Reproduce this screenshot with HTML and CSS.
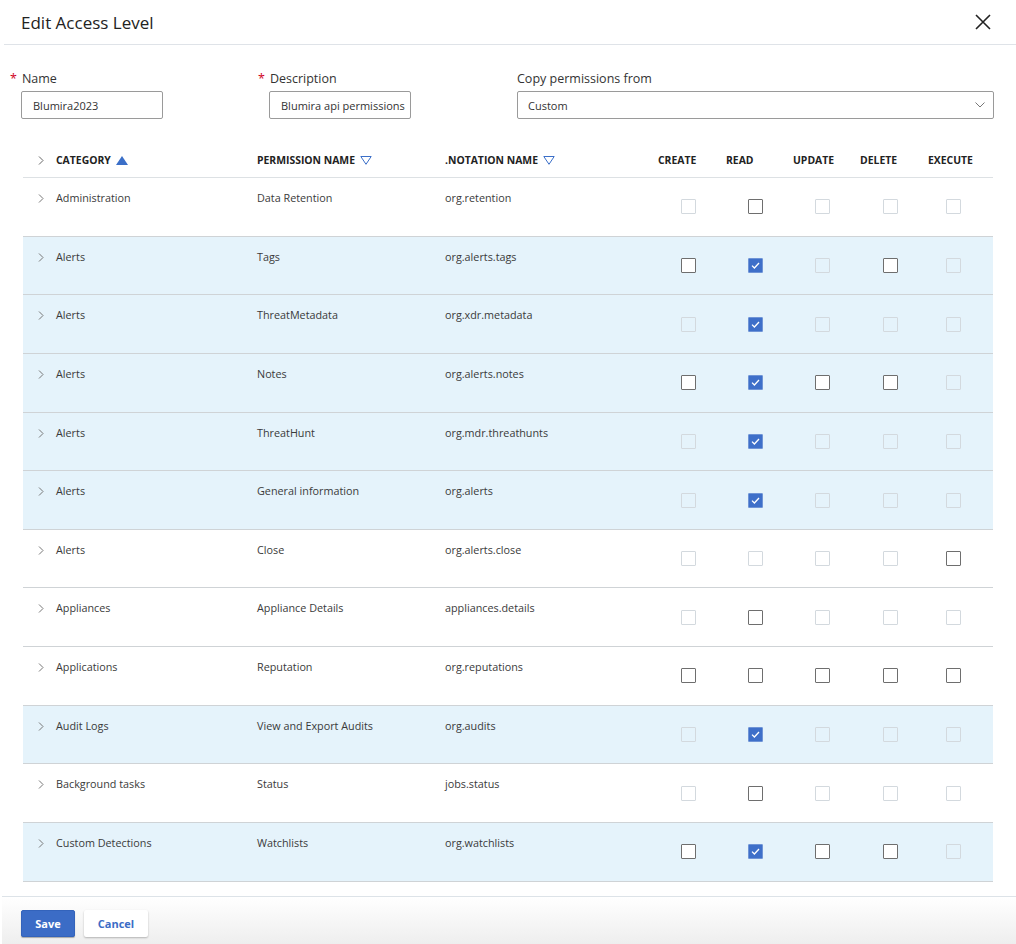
FILE: index.html
```html
<!DOCTYPE html>
<html lang="en">
<head>
    <meta charset="UTF-8">
    <meta name="viewport" content="width=device-width, initial-scale=1.0">
    <title>Edit Access Level</title>
    <link rel="stylesheet" href="styles.css">
</head>
<body>
    <div class="dialog">
        <div class="dialog-header">
            <h1>Edit Access Level</h1>
            <button class="close" aria-label="Close">
                <svg width="16" height="16" viewBox="0 0 16 16"><path d="M1 1L15 15M15 1L1 15" stroke="#222" stroke-width="1.6" fill="none"/></svg>
            </button>
        </div>

        <div class="form-row">
            <div class="field">
                <label class="required">Name</label>
                <input class="text-input" type="text" value="Blumira2023">
            </div>
            <div class="field">
                <label class="required">Description</label>
                <input class="text-input" type="text" value="Blumira api permissions">
            </div>
            <div class="field field-wide">
                <label>Copy permissions from</label>
                <div class="select">
                    <span>Custom</span>
                    <svg width="10" height="6" viewBox="0 0 10 6"><path d="M0.5 0.5L5 5L9.5 0.5" stroke="#777" fill="none"/></svg>
                </div>
            </div>
        </div>

        <div class="table">
            <div class="row head">
                <div class="cell chev"><svg width="6" height="9" viewBox="0 0 6 9"><path d="M1 0.5L5 4.5L1 8.5" stroke="#666" fill="none"/></svg></div>
                <div class="cell">CATEGORY <svg class="sort" width="12" height="9" viewBox="0 0 12 9"><path d="M6 0L12 9H0Z" fill="#3b6fc8"/></svg></div>
                <div class="cell">PERMISSION NAME <svg class="sort" width="12" height="9" viewBox="0 0 12 9"><path d="M0.8 0.5H11.2L6 8.3Z" stroke="#3b6fc8" fill="none"/></svg></div>
                <div class="cell">.NOTATION NAME <svg class="sort" width="12" height="9" viewBox="0 0 12 9"><path d="M0.8 0.5H11.2L6 8.3Z" stroke="#3b6fc8" fill="none"/></svg></div>
                <div class="cell op">CREATE</div>
                <div class="cell op">READ</div>
                <div class="cell op">UPDATE</div>
                <div class="cell op">DELETE</div>
                <div class="cell op">EXECUTE</div>
                <div class="cell"></div>
            </div>

            <div class="row">
                <div class="cell chev"><svg width="6" height="9" viewBox="0 0 6 9"><path d="M1 0.5L5 4.5L1 8.5" stroke="#777" fill="none"/></svg></div>
                <div class="cell">Administration</div>
                <div class="cell">Data Retention</div>
                <div class="cell">org.retention</div>
                <div class="cell box-cell"><span class="box off"></span></div>
                <div class="cell box-cell"><span class="box"></span></div>
                <div class="cell box-cell"><span class="box off"></span></div>
                <div class="cell box-cell"><span class="box off"></span></div>
                <div class="cell box-cell"><span class="box off"></span></div>
                <div class="cell"></div>
            </div>

            <div class="row selected">
                <div class="cell chev"><svg width="6" height="9" viewBox="0 0 6 9"><path d="M1 0.5L5 4.5L1 8.5" stroke="#777" fill="none"/></svg></div>
                <div class="cell">Alerts</div>
                <div class="cell">Tags</div>
                <div class="cell">org.alerts.tags</div>
                <div class="cell box-cell"><span class="box"></span></div>
                <div class="cell box-cell"><span class="box on"><svg width="9" height="7" viewBox="0 0 9 7"><path d="M1 3.6L3.4 6L8 1" stroke="#fff" stroke-width="1.3" fill="none"/></svg></span></div>
                <div class="cell box-cell"><span class="box off"></span></div>
                <div class="cell box-cell"><span class="box"></span></div>
                <div class="cell box-cell"><span class="box off"></span></div>
                <div class="cell"></div>
            </div>

            <div class="row selected">
                <div class="cell chev"><svg width="6" height="9" viewBox="0 0 6 9"><path d="M1 0.5L5 4.5L1 8.5" stroke="#777" fill="none"/></svg></div>
                <div class="cell">Alerts</div>
                <div class="cell">ThreatMetadata</div>
                <div class="cell">org.xdr.metadata</div>
                <div class="cell box-cell"><span class="box off"></span></div>
                <div class="cell box-cell"><span class="box on"><svg width="9" height="7" viewBox="0 0 9 7"><path d="M1 3.6L3.4 6L8 1" stroke="#fff" stroke-width="1.3" fill="none"/></svg></span></div>
                <div class="cell box-cell"><span class="box off"></span></div>
                <div class="cell box-cell"><span class="box off"></span></div>
                <div class="cell box-cell"><span class="box off"></span></div>
                <div class="cell"></div>
            </div>

            <div class="row selected">
                <div class="cell chev"><svg width="6" height="9" viewBox="0 0 6 9"><path d="M1 0.5L5 4.5L1 8.5" stroke="#777" fill="none"/></svg></div>
                <div class="cell">Alerts</div>
                <div class="cell">Notes</div>
                <div class="cell">org.alerts.notes</div>
                <div class="cell box-cell"><span class="box"></span></div>
                <div class="cell box-cell"><span class="box on"><svg width="9" height="7" viewBox="0 0 9 7"><path d="M1 3.6L3.4 6L8 1" stroke="#fff" stroke-width="1.3" fill="none"/></svg></span></div>
                <div class="cell box-cell"><span class="box"></span></div>
                <div class="cell box-cell"><span class="box"></span></div>
                <div class="cell box-cell"><span class="box off"></span></div>
                <div class="cell"></div>
            </div>

            <div class="row selected">
                <div class="cell chev"><svg width="6" height="9" viewBox="0 0 6 9"><path d="M1 0.5L5 4.5L1 8.5" stroke="#777" fill="none"/></svg></div>
                <div class="cell">Alerts</div>
                <div class="cell">ThreatHunt</div>
                <div class="cell">org.mdr.threathunts</div>
                <div class="cell box-cell"><span class="box off"></span></div>
                <div class="cell box-cell"><span class="box on"><svg width="9" height="7" viewBox="0 0 9 7"><path d="M1 3.6L3.4 6L8 1" stroke="#fff" stroke-width="1.3" fill="none"/></svg></span></div>
                <div class="cell box-cell"><span class="box off"></span></div>
                <div class="cell box-cell"><span class="box off"></span></div>
                <div class="cell box-cell"><span class="box off"></span></div>
                <div class="cell"></div>
            </div>

            <div class="row selected">
                <div class="cell chev"><svg width="6" height="9" viewBox="0 0 6 9"><path d="M1 0.5L5 4.5L1 8.5" stroke="#777" fill="none"/></svg></div>
                <div class="cell">Alerts</div>
                <div class="cell">General information</div>
                <div class="cell">org.alerts</div>
                <div class="cell box-cell"><span class="box off"></span></div>
                <div class="cell box-cell"><span class="box on"><svg width="9" height="7" viewBox="0 0 9 7"><path d="M1 3.6L3.4 6L8 1" stroke="#fff" stroke-width="1.3" fill="none"/></svg></span></div>
                <div class="cell box-cell"><span class="box off"></span></div>
                <div class="cell box-cell"><span class="box off"></span></div>
                <div class="cell box-cell"><span class="box off"></span></div>
                <div class="cell"></div>
            </div>

            <div class="row">
                <div class="cell chev"><svg width="6" height="9" viewBox="0 0 6 9"><path d="M1 0.5L5 4.5L1 8.5" stroke="#777" fill="none"/></svg></div>
                <div class="cell">Alerts</div>
                <div class="cell">Close</div>
                <div class="cell">org.alerts.close</div>
                <div class="cell box-cell"><span class="box off"></span></div>
                <div class="cell box-cell"><span class="box off"></span></div>
                <div class="cell box-cell"><span class="box off"></span></div>
                <div class="cell box-cell"><span class="box off"></span></div>
                <div class="cell box-cell"><span class="box"></span></div>
                <div class="cell"></div>
            </div>

            <div class="row">
                <div class="cell chev"><svg width="6" height="9" viewBox="0 0 6 9"><path d="M1 0.5L5 4.5L1 8.5" stroke="#777" fill="none"/></svg></div>
                <div class="cell">Appliances</div>
                <div class="cell">Appliance Details</div>
                <div class="cell">appliances.details</div>
                <div class="cell box-cell"><span class="box off"></span></div>
                <div class="cell box-cell"><span class="box"></span></div>
                <div class="cell box-cell"><span class="box off"></span></div>
                <div class="cell box-cell"><span class="box off"></span></div>
                <div class="cell box-cell"><span class="box off"></span></div>
                <div class="cell"></div>
            </div>

            <div class="row">
                <div class="cell chev"><svg width="6" height="9" viewBox="0 0 6 9"><path d="M1 0.5L5 4.5L1 8.5" stroke="#777" fill="none"/></svg></div>
                <div class="cell">Applications</div>
                <div class="cell">Reputation</div>
                <div class="cell">org.reputations</div>
                <div class="cell box-cell"><span class="box"></span></div>
                <div class="cell box-cell"><span class="box"></span></div>
                <div class="cell box-cell"><span class="box"></span></div>
                <div class="cell box-cell"><span class="box"></span></div>
                <div class="cell box-cell"><span class="box"></span></div>
                <div class="cell"></div>
            </div>

            <div class="row selected">
                <div class="cell chev"><svg width="6" height="9" viewBox="0 0 6 9"><path d="M1 0.5L5 4.5L1 8.5" stroke="#777" fill="none"/></svg></div>
                <div class="cell">Audit Logs</div>
                <div class="cell">View and Export Audits</div>
                <div class="cell">org.audits</div>
                <div class="cell box-cell"><span class="box off"></span></div>
                <div class="cell box-cell"><span class="box on"><svg width="9" height="7" viewBox="0 0 9 7"><path d="M1 3.6L3.4 6L8 1" stroke="#fff" stroke-width="1.3" fill="none"/></svg></span></div>
                <div class="cell box-cell"><span class="box off"></span></div>
                <div class="cell box-cell"><span class="box off"></span></div>
                <div class="cell box-cell"><span class="box off"></span></div>
                <div class="cell"></div>
            </div>

            <div class="row">
                <div class="cell chev"><svg width="6" height="9" viewBox="0 0 6 9"><path d="M1 0.5L5 4.5L1 8.5" stroke="#777" fill="none"/></svg></div>
                <div class="cell">Background tasks</div>
                <div class="cell">Status</div>
                <div class="cell">jobs.status</div>
                <div class="cell box-cell"><span class="box off"></span></div>
                <div class="cell box-cell"><span class="box"></span></div>
                <div class="cell box-cell"><span class="box off"></span></div>
                <div class="cell box-cell"><span class="box off"></span></div>
                <div class="cell box-cell"><span class="box off"></span></div>
                <div class="cell"></div>
            </div>

            <div class="row selected">
                <div class="cell chev"><svg width="6" height="9" viewBox="0 0 6 9"><path d="M1 0.5L5 4.5L1 8.5" stroke="#777" fill="none"/></svg></div>
                <div class="cell">Custom Detections</div>
                <div class="cell">Watchlists</div>
                <div class="cell">org.watchlists</div>
                <div class="cell box-cell"><span class="box"></span></div>
                <div class="cell box-cell"><span class="box on"><svg width="9" height="7" viewBox="0 0 9 7"><path d="M1 3.6L3.4 6L8 1" stroke="#fff" stroke-width="1.3" fill="none"/></svg></span></div>
                <div class="cell box-cell"><span class="box"></span></div>
                <div class="cell box-cell"><span class="box"></span></div>
                <div class="cell box-cell"><span class="box off"></span></div>
                <div class="cell"></div>
            </div>
        </div>

        <div class="dialog-footer">
            <button class="btn btn-primary">Save</button>
            <button class="btn btn-secondary">Cancel</button>
        </div>
    </div>
</body>
</html>
```

FILE: styles.css
```css
body {
    margin: 0;
    font-family: 'Open Sans', 'Noto Sans', sans-serif;
    color: #333;
    background-color: #fff;
}
.dialog {
    width: 1016px;
    height: 944px;
    display: flex;
    flex-direction: column;
    overflow: hidden;
}
.dialog-header {
    height: 44px;
    margin-left: 4px;
    padding: 0 25px 0 17px;
    display: flex;
    align-items: center;
    justify-content: space-between;
    border-bottom: 1px solid #dfe3e8;
}
.dialog-header h1 {
    margin: 0;
    font-size: 17px;
    font-weight: 400;
    color: #222;
}
.close {
    border: none;
    background: none;
    padding: 0;
    display: flex;
    cursor: pointer;
}
.form-row {
    display: flex;
    gap: 106px;
    padding: 25px 0 0 21px;
}
.field {
    display: flex;
    flex-direction: column;
    width: 142px;
}
.field-wide {
    width: 477px;
}
label {
    font-size: 12.5px;
    line-height: 17px;
    color: #333;
    margin-bottom: 4px;
}
label.required::before {
    content: "*";
    color: #d0021b;
    margin-left: -11px;
    margin-right: 5px;
}
.text-input {
    box-sizing: border-box;
    width: 142px;
    height: 28px;
    padding: 0 0 0 11px;
    border: 1px solid #9a9a9a;
    border-radius: 2px;
    font-family: inherit;
    font-size: 11px;
    color: #333;
    outline: none;
}
.select {
    box-sizing: border-box;
    height: 28px;
    padding: 0 8px 0 10px;
    border: 1px solid #9a9a9a;
    border-radius: 2px;
    display: flex;
    align-items: center;
    justify-content: space-between;
    font-size: 11px;
}
.table {
    margin: 26px 23px 0;
}
.row {
    display: grid;
    grid-template-columns: 33px 201px 188px 209px 68px 67px 67px 68px 58px 11px;
    height: 58.65px;
    box-sizing: border-box;
    border-bottom: 1px solid #cfd3d6;
    font-size: 10.8px;
    color: #3a3a3a;
}
.row.selected {
    background-color: #e5f3fb;
}
.row.head {
    height: 33px;
    border-bottom-color: #dde1e4;
    font-size: 10.4px;
    font-weight: 700;
    color: #222;
}
.cell {
    padding-top: 12px;
    line-height: 16px;
}
.head .cell {
    padding-top: 7px;
    display: flex;
    align-items: center;
    height: 16px;
}
.head .op {
    padding-left: 4px;
}
.sort {
    margin-left: 5px;
}
.chev {
    display: flex;
    justify-content: flex-start;
    padding-left: 15px;
    padding-top: 16px;
    align-items: flex-start;
}
.head .chev {
    padding-top: 7px;
    align-items: center;
}
.box-cell {
    padding-top: 0;
    display: flex;
    align-items: center;
    justify-content: center;
}
.box {
    box-sizing: border-box;
    width: 15px;
    height: 15px;
    border: 1px solid #6e6e6e;
    border-radius: 1px;
    background-color: #fff;
    display: flex;
    align-items: center;
    justify-content: center;
}
.box.off {
    border-color: #d3d9de;
    background-color: transparent;
}
.box.on {
    border-color: #6f94d6;
    background-color: #3e6fc9;
}
.dialog-footer {
    margin-top: auto;
    height: 48px;
    border-top: 1px solid #dde3e8;
    margin-left: 2px;
    padding: 13px 0 0 19px;
    box-sizing: border-box;
    display: flex;
    align-items: flex-start;
    gap: 9px;
    background: linear-gradient(#ffffff, #eeeeee);
}
.btn {
    height: 27px;
    border-radius: 2px;
    font-family: inherit;
    font-size: 11px;
    font-weight: 700;
    cursor: pointer;
}
.btn-primary {
    width: 54px;
    background-color: #3b6cc6;
    border: 1px solid #3363bb;
    color: #fff;
    box-shadow: 0 1px 1px rgba(0, 0, 0, 0.3);
}
.btn-secondary {
    width: 64px;
    background-color: #fff;
    border: none;
    color: #3b6cc6;
    box-shadow: 0 1px 2px rgba(0, 0, 0, 0.25);
}
```
